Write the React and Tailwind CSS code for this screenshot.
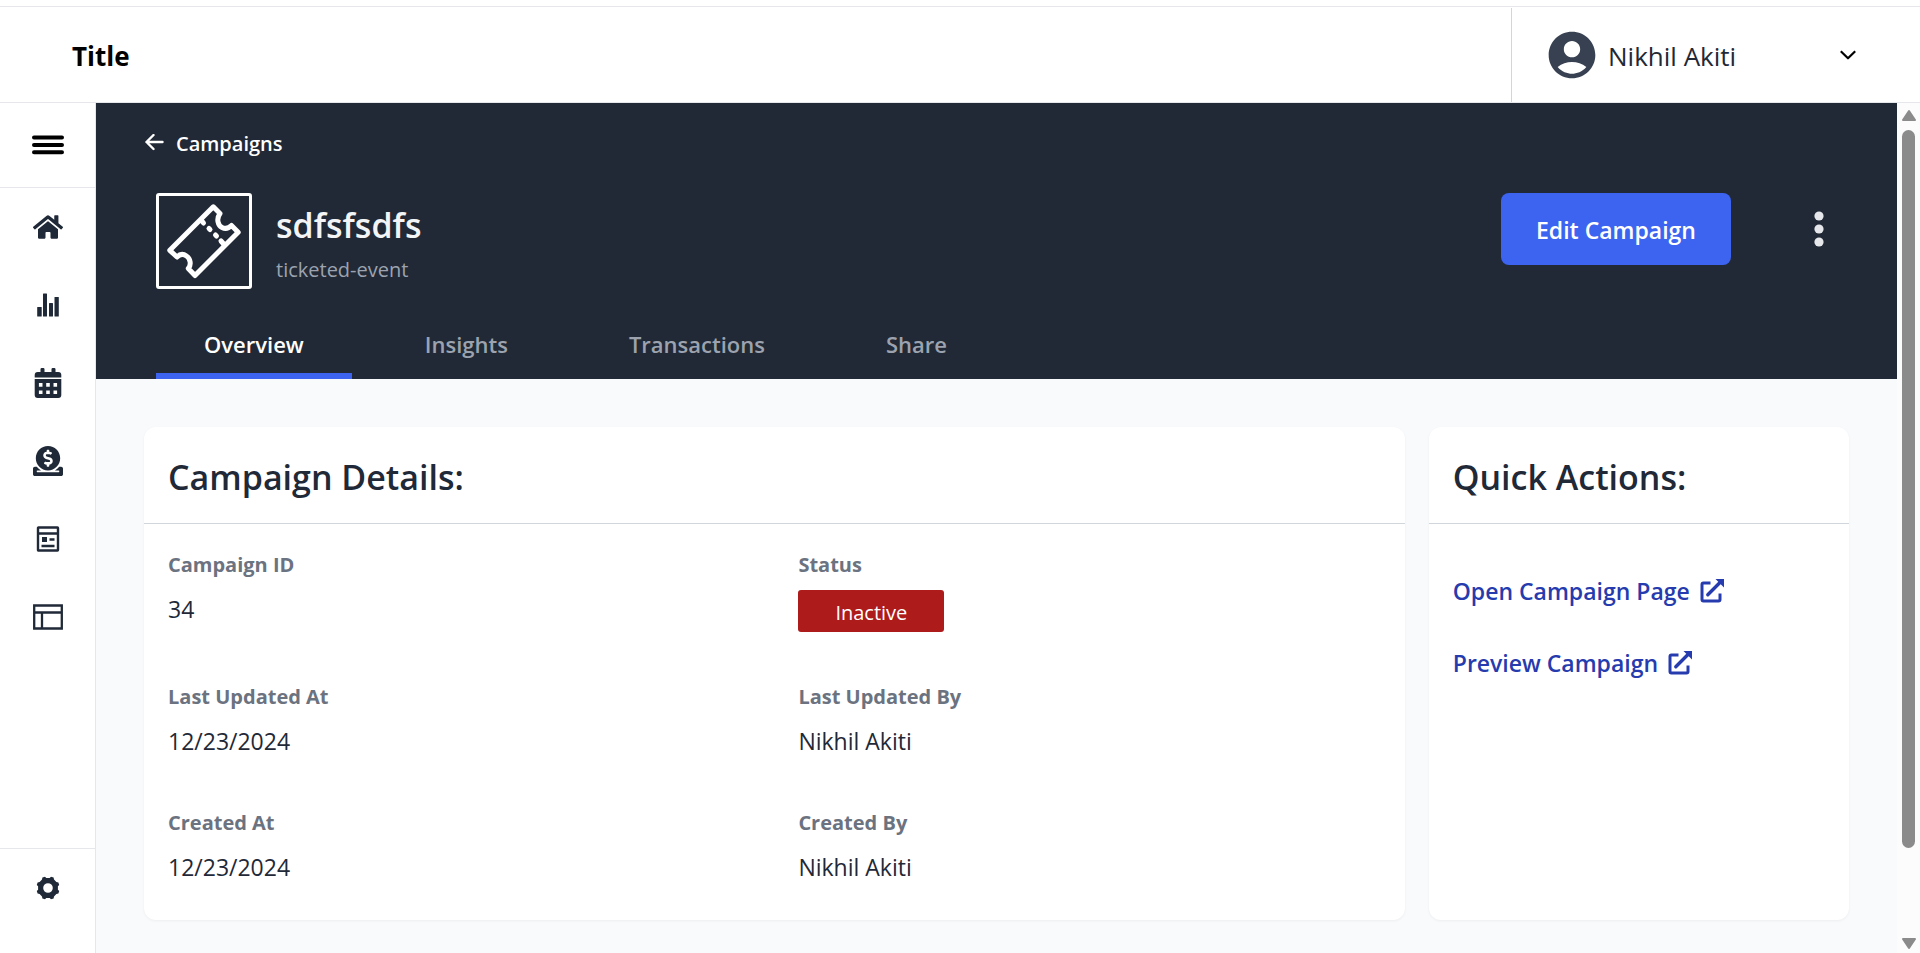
import { FaHome, FaDonate } from "react-icons/fa";
import { MdAccountCircle } from "react-icons/md";

function ChartIcon() {
  return (
    <svg viewBox="0 0 24 24" className="size-6" fill="currentColor" aria-hidden="true">
      <rect x="1.2" y="14" width="4.500" height="9.500" rx="0.5" />
      <rect x="7" y="0.5" width="4" height="23" rx="0.5" />
      <rect x="13" y="10" width="4" height="13.500" rx="0.5" />
      <rect x="18.500" y="4" width="4.300" height="19.500" rx="0.5" />
    </svg>
  );
}

function CalendarIcon() {
  return (
    <svg viewBox="0 0 28 30" className="h-[30px] w-7" fill="currentColor" aria-hidden="true">
      <path d="M6.500 1.200Q6.500 0 7.700 0h1.600q1.200 0 1.200 1.200V4h7V1.200Q17.500 0 18.700 0h1.600q1.200 0 1.200 1.200V4H24.300q3 0 3 3v2.500H.7V7q0-3 3-3h2.800Z" />
      <path
        fillRule="evenodd"
        d="M.7 10.900h26.600V27q0 3-3 3H3.700q-3 0-3-3ZM4.900 15.100v3.600h3.600v-3.600ZM12.200 15.100v3.600h3.600v-3.600ZM19.500 15.100v3.600h3.600v-3.600ZM4.900 22.500v3.500h3.600v-3.500ZM12.200 22.500v3.500h3.600v-3.500ZM19.500 22.500v3.500h3.600v-3.500Z"
      />
    </svg>
  );
}

function ArticleIcon() {
  return (
    <svg viewBox="0 0 24 26" className="h-[26px] w-6" fill="none" stroke="currentColor" strokeWidth="2.400" aria-hidden="true">
      <rect x="2" y="1.500" width="20" height="23" rx="0.5" />
      <path d="M2 7.500h20M5.500 20h13M13.500 13.500h5" />
      <rect x="6" y="11" width="5" height="5" fill="currentColor" stroke="none" />
    </svg>
  );
}

function LayoutIcon() {
  return (
    <svg viewBox="0 0 30 26" className="h-[26px] w-[30px]" fill="none" stroke="currentColor" strokeWidth="2.300" aria-hidden="true">
      <path d="M1.200 1.500h27.600v23H1.200zM1 8.500h28M9 8.500v16" />
    </svg>
  );
}

function GearIcon() {
  return (
    <svg viewBox="-12 -12 24 24" className="size-6" fill="currentColor" aria-hidden="true">
      <path
        fillRule="evenodd"
        d="M-5.600-10.400-3-11.200-1.700-9.900H1.700L3-11.200 5.600-10.400 6-8.400 8.400-6 10.400-5.600 11.200-3 9.900-1.700V1.700L11.200 3 10.400 5.600 8.400 6 6 8.400 5.600 10.400 3 11.200 1.700 9.900H-1.700L-3 11.200-5.600 10.400-6 8.400-8.400 6-10.400 5.600-11.200 3-9.900 1.700V-1.700L-11.200-3-10.400-5.600-8.400-6-6-8.400ZM0-4.800A4.800 4.800 0 1 0 0 4.800 4.800 4.800 0 1 0 0-4.800Z"
      />
    </svg>
  );
}

function MenuIcon() {
  return (
    <svg viewBox="0 0 32 20" className="h-5 w-8" stroke="currentColor" strokeWidth="4" strokeLinecap="round" aria-hidden="true">
      <path d="M2 2.600h28M2 10h28M2 17.300h28" />
    </svg>
  );
}

function BackIcon() {
  return (
    <svg viewBox="0 0 20 18" className="h-[18px] w-5" fill="none" stroke="currentColor" strokeWidth="2.400" strokeLinecap="round" strokeLinejoin="round" aria-hidden="true">
      <path d="M9.500 1 2.500 8l7 7M2.500 8h16" />
    </svg>
  );
}

function ChevronIcon() {
  return (
    <svg viewBox="0 0 16 10" className="h-[10px] w-4" fill="none" stroke="currentColor" strokeWidth="2.200" strokeLinejoin="round" aria-hidden="true">
      <path d="M.8 1.200 8 8.300l7.200-7.100" />
    </svg>
  );
}

function TicketIcon() {
  return (
    <svg viewBox="0 0 90 90" className="size-full" fill="none" stroke="currentColor" strokeWidth="5" strokeLinecap="round" strokeLinejoin="round" aria-hidden="true">
      <path d="M54.300 10.800 61 17.500C57 23 59 29.500 63 31.500C67 33.500 70 32 72.500 29.500L79.200 36.200 36 79.500 29.300 72.500C32.500 69 31.500 62.500 27.500 60C24 57.500 20.500 58.500 18 61L10.800 54.300Z" />
      <path d="M42.500 24.500 44.500 27M50 32.500 51 33.500M56.500 39 57.500 40M62 45 65.500 49" />
    </svg>
  );
}

function ExternalIcon() {
  return (
    <svg viewBox="0 0 24 24" className="size-6" fill="none" stroke="currentColor" strokeWidth="3" aria-hidden="true">
      <path d="M10.500 4H3.500A1.500 1.500 0 0 0 2 5.500v15a1.500 1.500 0 0 0 1.500 1.500h15A1.500 1.500 0 0 0 20 20.500v-6" />
      <path d="M7.800 15.700 20 3.500" strokeLinecap="round" strokeWidth="3.400" />
      <path d="M15.500 0H24v8.500Z" fill="currentColor" stroke="none" />
    </svg>
  );
}

function DotsIcon() {
  return (
    <svg viewBox="0 0 10 36" className="h-9 w-[10px]" fill="currentColor" aria-hidden="true">
      <circle cx="5" cy="5" r="4.600" />
      <circle cx="5" cy="18" r="4.600" />
      <circle cx="5" cy="31" r="4.600" />
    </svg>
  );
}

const navItems = [
  { label: "Home", icon: <FaHome className="size-[30px]" /> },
  { label: "Reports", icon: <ChartIcon /> },
  { label: "Calendar", icon: <CalendarIcon /> },
  { label: "Donations", icon: <FaDonate className="size-[30px]" /> },
  { label: "Articles", icon: <ArticleIcon /> },
  { label: "Layout", icon: <LayoutIcon /> },
];

const tabs = ["Overview", "Insights", "Transactions", "Share"];

function TopBar() {
  return (
    <header className="mt-[6px] flex h-[97px] shrink-0 items-stretch justify-between border-y border-gray-200 bg-white">
      <div className="flex items-center pt-1 pl-[72px] text-[26px] font-bold text-black">Title</div>
      <button type="button" className="mt-px flex w-[409px] items-center border-l border-gray-300 pr-16 pl-8 text-[#1f2937]">
        <MdAccountCircle className="size-[56px] shrink-0 text-[#374151]" />
        <span className="grow pt-[2px] pl-2 text-left text-[26px]">Nikhil Akiti</span>
        <span className="text-black">
          <ChevronIcon />
        </span>
      </button>
    </header>
  );
}

function Sidebar() {
  return (
    <aside className="flex w-24 shrink-0 flex-col border-r border-gray-200 bg-white text-[#1f2937]">
      <button type="button" aria-label="Menu" className="flex h-[85px] items-center justify-center border-b border-gray-200 text-black">
        <MenuIcon />
      </button>
      <nav className="flex grow flex-col">
        {navItems.map((item) => (
          <a key={item.label} href="#" aria-label={item.label} className="flex h-[78px] items-center justify-center">
            {item.icon}
          </a>
        ))}
      </nav>
      <a href="#" aria-label="Settings" className="flex h-[105px] items-start justify-center border-t border-gray-200 pt-[27px]">
        <GearIcon />
      </a>
    </aside>
  );
}

function Banner() {
  return (
    <section className="bg-[#212936] px-12 text-white">
      <a href="#" className="flex h-20 items-center gap-3 text-[20px] font-semibold">
        <BackIcon />
        <span className="pt-[2px]">Campaigns</span>
      </a>
      <div className="flex items-start pt-[10px] pr-[25px] pl-3">
        <div className="size-24 shrink-0 rounded-[3px] border-3 border-white">
          <TicketIcon />
        </div>
        <div className="grow pt-[11px] pl-6">
          <h1 className="text-[34px] leading-[42px] font-semibold text-gray-100">sdfsfsdfs</h1>
          <p className="pt-[10px] text-[20px] leading-[28px] text-[#9ca3af]">ticketed-event</p>
        </div>
        <button type="button" className="h-[72px] w-[230px] rounded-lg bg-[#3c64f0] pt-[2px] text-[23px] font-semibold text-white">
          Edit Campaign
        </button>
        <button type="button" aria-label="More options" className="ml-[83px] flex h-[72px] items-center text-gray-200">
          <DotsIcon />
        </button>
      </div>
      <div role="tablist" className="flex gap-[25px] pt-5 pl-3">
        {tabs.map((tab, i) => (
          <button
            key={tab}
            type="button"
            role="tab"
            aria-selected={i === 0}
            className={
              i === 0
                ? "h-[70px] border-b-6 border-[#3c64f0] px-12 pt-[6px] text-[22px] font-semibold text-white"
                : "h-[70px] border-b-6 border-transparent px-12 pt-[6px] text-[22px] font-semibold text-[#9ca3af]"
            }
          >
            {tab}
          </button>
        ))}
      </div>
    </section>
  );
}

function Card({ title, children }) {
  return (
    <section className="rounded-xl bg-white shadow-[0_1px_3px_rgba(0,0,0,0.05)]">
      <h2 className="h-[97px] border-b border-gray-300 px-6 pt-[26px] text-[34px] leading-[48px] font-semibold text-[#1f2937]">{title}</h2>
      {children}
    </section>
  );
}

function Field({ label, children }) {
  return (
    <div className="px-6">
      <dt className="text-[20px] leading-[32px] font-bold text-[#6b7280]">{label}</dt>
      <dd className="text-[23px] leading-[36px] text-[#1f2937]">{children}</dd>
    </div>
  );
}

function ScrollRail() {
  return (
    <div aria-hidden="true" className="flex w-[23px] shrink-0 flex-col items-center bg-[#fcfcfc] pt-[6px] pb-[3px] text-[#8b8b8b]">
      <svg viewBox="0 0 14 12" className="h-3 w-[14px]" fill="currentColor" stroke="currentColor" strokeWidth="2" strokeLinejoin="round">
        <path d="M7 2 13 11H1Z" />
      </svg>
      <div className="mt-[9px] w-[13px] grow-[718] rounded-full bg-[#8b8b8b]" />
      <div className="grow-[90]" />
      <svg viewBox="0 0 14 12" className="h-3 w-[14px]" fill="currentColor" stroke="currentColor" strokeWidth="2" strokeLinejoin="round">
        <path d="M7 10 13 1H1Z" />
      </svg>
    </div>
  );
}

export default function App() {
  return (
    <div className="flex h-screen flex-col overflow-hidden bg-white font-['Open_Sans',sans-serif]">
      <TopBar />
      <div className="flex min-h-0 grow">
        <Sidebar />
        <main className="min-w-0 grow bg-[#f9fafc]">
          <Banner />
          <div className="grid grid-cols-[3fr_1fr] gap-6 px-12 pt-12 pb-8">
            <Card title="Campaign Details:">
              <dl className="grid grid-cols-2 gap-y-12 pt-[25px] pb-[35px]">
                <Field label="Campaign ID">
                  <span className="block pt-[10px]">34</span>
                </Field>
                <Field label="Status">
                  <span className="mt-[9px] mb-px flex h-[42px] w-[146px] items-center justify-center rounded-[3px] bg-[#ae1b1b] pt-[3px] text-[20px] text-white">Inactive</span>
                </Field>
                <Field label="Last Updated At">
                  <span className="block pt-[10px]">12/23/2024</span>
                </Field>
                <Field label="Last Updated By">
                  <span className="block pt-[10px]">Nikhil Akiti</span>
                </Field>
                <Field label="Created At">
                  <span className="block pt-[10px]">12/23/2024</span>
                </Field>
                <Field label="Created By">
                  <span className="block pt-[10px]">Nikhil Akiti</span>
                </Field>
              </dl>
            </Card>
            <Card title="Quick Actions:">
              <div className="flex flex-col items-start gap-9 px-6 pt-[49px] text-[23px] leading-[36px] font-semibold text-[#263bad]">
                <a href="#" className="flex items-center gap-[10px]">
                  Open Campaign Page <ExternalIcon />
                </a>
                <a href="#" className="flex items-center gap-[10px]">
                  Preview Campaign <ExternalIcon />
                </a>
              </div>
            </Card>
          </div>
        </main>
        <ScrollRail />
      </div>
    </div>
  );
}
